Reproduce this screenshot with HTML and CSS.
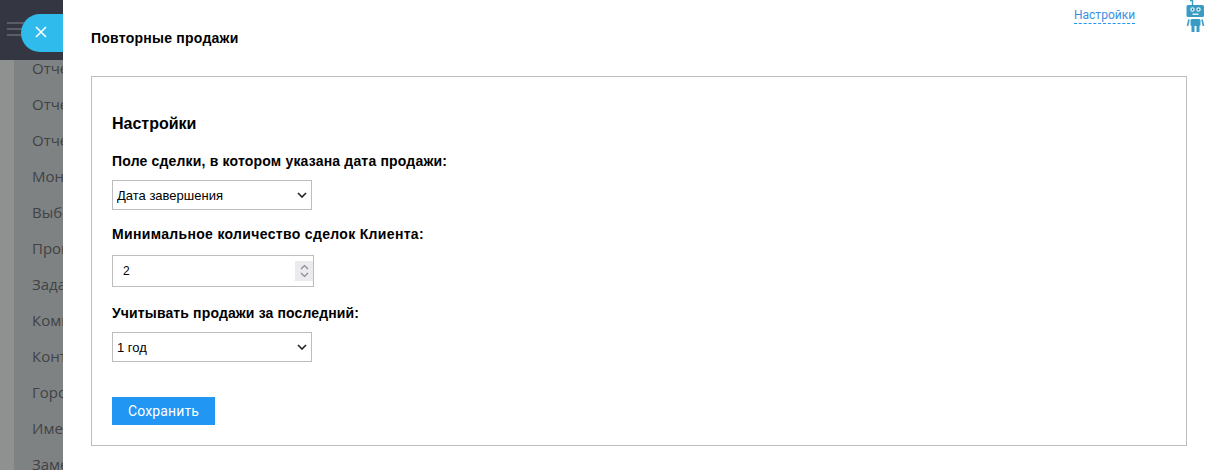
FILE: index.html
```html
<!DOCTYPE html>
<html lang="ru">
<head>
  <meta charset="UTF-8" />
  <title>Повторные продажи</title>
  <link rel="stylesheet" href="styles.css">
</head>
<body>
  <aside class="backdrop">
    <div class="topbar">
      <div class="burger"><span></span><span></span><span></span></div>
    </div>
    <ul class="side-menu">
      <li>Отчеты</li>
      <li>Отчеты</li>
      <li>Отчеты</li>
      <li>Монитор</li>
      <li>Выборки</li>
      <li>Процессы</li>
      <li>Задачи</li>
      <li>Компании</li>
      <li>Контакты</li>
      <li>Города</li>
      <li>Имена</li>
      <li>Заметки</li>
    </ul>
    <button class="close-btn" type="button">
      <svg width="12" height="12" viewBox="0 0 12 12"><path d="M1 1l10 10M11 1L1 11" stroke="#fff" stroke-width="1.6" fill="none"/></svg>
    </button>
  </aside>

  <main class="panel">
    <header class="panel-head">
      <h1>Повторные продажи</h1>
      <a class="settings-link" href="#">Настройки</a>
      <svg class="robot" width="20" height="33" viewBox="0 0 20 33">
        <path d="M5 0.5h3M7.5 0.5v5" stroke="#3a9cc4" stroke-width="1.4" fill="none"/>
        <rect x="1.5" y="5" width="17.5" height="12" rx="1.5" fill="#3a9cc4"/>
        <circle cx="7.5" cy="9.5" r="2.2" fill="#e3f2f7"/>
        <circle cx="13.5" cy="9.5" r="2.2" fill="#e3f2f7"/>
        <circle cx="7.5" cy="9.5" r="0.9" fill="#1f6f90"/>
        <circle cx="13.5" cy="9.5" r="0.9" fill="#1f6f90"/>
        <rect x="7.5" y="13.5" width="6" height="1.5" fill="#e3f2f7"/>
        <rect x="5.5" y="19" width="10" height="7" rx="1.5" fill="#3a9cc4"/>
        <path d="M4 19.5L2.5 26M17 19.5L18.5 26" stroke="#3a9cc4" stroke-width="1.6" fill="none"/>
        <rect x="6.5" y="26" width="3" height="6" fill="#3a9cc4"/>
        <rect x="11.5" y="26" width="3" height="6" fill="#3a9cc4"/>
      </svg>
    </header>

    <section class="card">
      <h2>Настройки</h2>
      <form class="settings-form">
        <label for="dateField">Поле сделки, в котором указана дата продажи:</label>
        <div class="select-wrap">
          <select id="dateField">
            <option>Дата завершения</option>
          </select>
          <svg class="select-arrow" width="10" height="6" viewBox="0 0 10 6"><path d="M1 1l4 4 4-4" stroke="#222" stroke-width="1.6" fill="none"/></svg>
        </div>

        <label class="label-wide" for="minDeals">Минимальное количество сделок Клиента:</label>
        <div class="number-field">
          <span id="minDeals">2</span>
          <span class="spin">
            <svg width="9" height="18" viewBox="0 0 9 18"><path d="M1 7l3.5-3.5L8 7M1 11l3.5 3.5L8 11" stroke="#8a8a8a" stroke-width="1.2" fill="none"/></svg>
          </span>
        </div>

        <label class="label-tight" for="period">Учитывать продажи за последний:</label>
        <div class="select-wrap">
          <select id="period">
            <option>1 год</option>
          </select>
          <svg class="select-arrow" width="10" height="6" viewBox="0 0 10 6"><path d="M1 1l4 4 4-4" stroke="#222" stroke-width="1.6" fill="none"/></svg>
        </div>

        <button class="save-btn" type="submit">Сохранить</button>
      </form>
    </section>
  </main>
</body>
</html>
```

FILE: styles.css
```css
html,
body {
  margin: 0;
  height: 470px;
  overflow: hidden;
}

body {
  display: flex;
  font-family: "Liberation Sans", Arial, sans-serif;
  background-color: #fff;
}

.backdrop {
  position: relative;
  width: 63px;
  flex-shrink: 0;
  overflow: hidden;
  background: linear-gradient(to right, #8f9191 14px, #7f8283 14px);
}

.topbar {
  height: 60px;
  padding: 22px 0 0 7px;
  box-sizing: border-box;
  background-color: #343741;
}

.burger span {
  display: block;
  width: 20px;
  height: 2px;
  margin-bottom: 4px;
  background-color: #5a5d66;
}

.side-menu {
  list-style: none;
  margin: -10px 0 0;
  padding: 0 0 0 32px;
  font-family: "Open Sans", sans-serif;
  font-size: 15px;
  color: #3f4246;
  white-space: nowrap;
}

.side-menu li {
  height: 36px;
  line-height: 36px;
}

.close-btn {
  position: absolute;
  top: 14px;
  left: 21px;
  width: 60px;
  height: 38px;
  padding: 0 0 0 14px;
  border: none;
  border-radius: 19px 0 0 19px;
  background-color: #2fbcec;
  text-align: left;
}

.panel {
  flex: 1;
  padding: 0 23px 0 28px;
}

.panel-head {
  position: relative;
  height: 76px;
}

.panel-head h1 {
  margin: 0;
  padding-top: 30px;
  font-size: 14px;
  line-height: 16px;
  font-weight: bold;
  letter-spacing: 0.24px;
  color: #000;
}

.settings-link {
  position: absolute;
  top: 7px;
  left: 983px;
  font-family: Roboto, sans-serif;
  font-size: 12px;
  line-height: 16px;
  color: #3d8fe0;
  text-decoration: none;
  border-bottom: 1px dashed #2196f3;
}

.robot {
  position: absolute;
  top: 0;
  left: 1094px;
}

.card {
  height: 370px;
  padding: 37px 20px 0;
  box-sizing: border-box;
  border: 1px solid #bdbdbd;
}

.card h2 {
  margin: 0 0 19px;
  font-size: 16px;
  line-height: 20px;
  font-weight: bold;
  color: #000;
}

.settings-form {
  display: flex;
  flex-direction: column;
  align-items: flex-start;
}

.settings-form label {
  font-size: 14px;
  line-height: 16px;
  font-weight: bold;
  letter-spacing: 0.18px;
  color: #000;
  margin-bottom: 11px;
}

.settings-form .label-wide {
  letter-spacing: 0.33px;
}

.settings-form .label-tight {
  letter-spacing: 0.13px;
}

.select-wrap {
  position: relative;
  width: 200px;
  height: 30px;
  margin-bottom: 16px;
}

.select-wrap select {
  appearance: none;
  width: 100%;
  height: 100%;
  padding: 0 0 0 4px;
  border: 1px solid #bdbdbd;
  border-radius: 0;
  background-color: #fff;
  font-family: "Liberation Sans", Arial, sans-serif;
  font-size: 13px;
  color: #000;
}

.select-arrow {
  position: absolute;
  top: 12px;
  right: 5px;
}

.number-field {
  display: flex;
  align-items: center;
  justify-content: space-between;
  width: 202px;
  height: 32px;
  padding: 0 0 0 10px;
  margin-top: 2px;
  margin-bottom: 18px;
  box-sizing: border-box;
  border: 1px solid #bdbdbd;
  font-size: 12px;
  color: #000;
}

.spin {
  display: flex;
  align-items: center;
  justify-content: center;
  width: 18px;
  height: 20px;
  background-color: #eaeaef;
}

.save-btn {
  width: 103px;
  height: 28px;
  margin-top: 19px;
  padding: 0;
  border: none;
  background-color: #2196f3;
  color: #fff;
  font-family: Roboto, sans-serif;
  font-size: 14px;
  letter-spacing: 0.15px;
}
```
